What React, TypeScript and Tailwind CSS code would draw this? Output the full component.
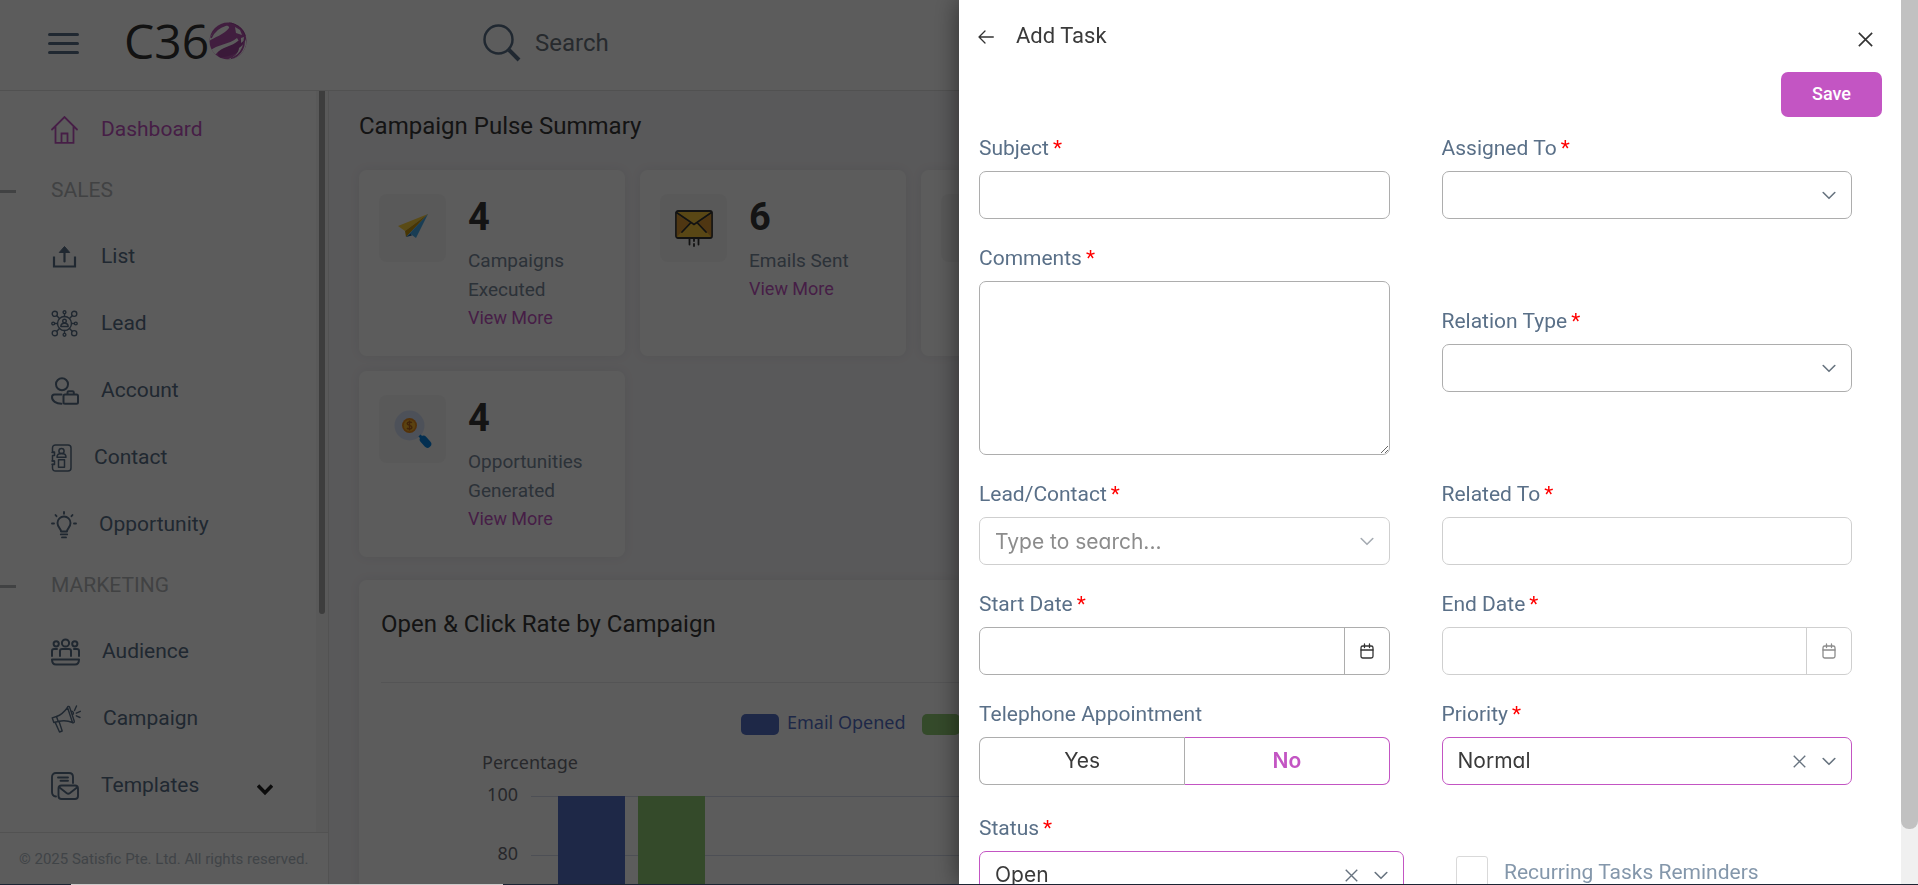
import type { ReactNode } from "react";

const roboto = "font-['Roboto',sans-serif]";
const fieldText = "font-['Inter',sans-serif] text-[21px] text-[#3a3a3a] [font-feature-settings:'cv11']";

/* ---------- icons ---------- */

function Svg({ w, h, sw = 2, className, children }: { w: number; h: number; sw?: number; className?: string; children: ReactNode }) {
  return (
    <svg
      width={w}
      height={h}
      viewBox={`0 0 ${w} ${h}`}
      fill="none"
      stroke="currentColor"
      strokeWidth={sw}
      strokeLinecap="round"
      strokeLinejoin="round"
      aria-hidden="true"
      className={`shrink-0 ${className ?? ""}`}
    >
      {children}
    </svg>
  );
}

const HomeIcon = () => (
  <Svg w={28} h={28} sw={1.8}>
    <path d="M1 13.5 13.5 1 26 13.5M4.5 10.5V26.8H22.5V10.5M10.5 26.8V17.5H16.5V26.8" strokeLinejoin="miter" />
  </Svg>
);

const ListIcon = () => (
  <Svg w={28} h={24} sw={2.2}>
    <path d="M3 12.5V21.5H24V12.5" strokeLinecap="square" strokeLinejoin="miter" />
    <path d="M13.5 16.5V6" />
    <path d="M8.5 7.2 13.5 1.5 18.5 7.2Z" fill="currentColor" strokeWidth={1} />
  </Svg>
);

const LeadIcon = () => (
  <Svg w={28} h={27} sw={1.4}>
    <circle cx="13.5" cy="13.5" r="7" />
    <circle cx="13.5" cy="11" r="1.8" />
    <path d="M9.8 16.5c0-2 1.4-3.3 3.7-3.3s3.7 1.3 3.7 3.3Z" />
    <circle cx="3.8" cy="3.8" r="2.6" />
    <circle cx="23.2" cy="3.8" r="2.6" />
    <circle cx="3.8" cy="23.2" r="2.6" />
    <circle cx="23.2" cy="23.2" r="2.6" />
    <circle cx="13.5" cy="2.2" r="1.4" />
    <circle cx="13.5" cy="24.8" r="1.4" />
    <circle cx="2.2" cy="13.5" r="1.4" />
    <circle cx="24.8" cy="13.5" r="1.4" />
    <path d="M5.8 5.8 8.5 8.5M21.2 5.8 18.5 8.5M5.8 21.2 8.5 18.5M21.2 21.2 18.5 18.5M13.5 3.8V6.5M13.5 20.5V23.2M3.8 13.5H6.5M20.5 13.5H23.2" />
  </Svg>
);

const AccountIcon = () => (
  <Svg w={28} h={28} sw={2}>
    <circle cx="11" cy="7.2" r="6" />
    <path d="M10.5 17.5H3.5C1.8 17.5 1 18.5 1 20c0 4 4 6.7 9.5 6.7" />
    <rect x="12.5" y="17.5" width="14.5" height="9.3" rx="1.5" />
    <path d="M16.5 17v-1.5c0-.8.5-1.2 1.2-1.2h3.8c.8 0 1.3.4 1.3 1.2V17" />
  </Svg>
);

const ContactIcon = () => (
  <Svg w={21} h={28} sw={1.5}>
    <path d="M1.5 8V4C1.5 2.2 2.7 1 4.5 1H17c1.8 0 3 1.2 3 3V24c0 1.8-1.2 3-3 3H4.5c-1.8 0-3-1.2-3-3V20.5H3.5V17H1.5V11.5H3.5V8Z" />
    <path d="M1 8.5H3M1 17H3M1 20.3H3" />
    <circle cx="10.5" cy="7" r="2.6" />
    <path d="M6 13.2c0-2 1.5-3.6 4.5-3.6s4.5 1.6 4.5 3.6Z" />
    <rect x="7.5" y="15.8" width="6" height="7.4" />
  </Svg>
);

const BulbIcon = () => (
  <Svg w={26} h={28} sw={1.9}>
    <path d="M10 20.5C10 17.5 6.5 16.5 6.5 12a6.5 6.5 0 0 1 13 0C19.5 16.5 16 17.5 16 20.5Z" />
    <path d="M9.8 23.4H16.2M11 26.4H15M13 1V2.8M1 12.5H3M23 12.5H25M4.5 4 5.5 5.2M21.5 4 20.5 5.2" />
  </Svg>
);

const AudienceIcon = () => (
  <Svg w={29} h={28} sw={2}>
    <circle cx="14.5" cy="5" r="3.6" />
    <circle cx="5.2" cy="5.8" r="2.6" />
    <circle cx="23.8" cy="5.8" r="2.6" />
    <path d="M9 18V13c0-1.2.6-2 2-2h7c1.4 0 2 .8 2 2V18M1 18V13c0-1.2.6-2 2-2H6M28 18V13c0-1.2-.6-2-2-2H23" />
    <path d="M1 21.5H28c0 3-1.5 5-4 5H5c-2.5 0-4-2-4-5Z" />
  </Svg>
);

const CampaignIcon = () => (
  <Svg w={30} h={28} sw={1.4}>
    <path d="M1.2 12.8 5.5 11.5C10 10 14 6 16.5 2.5L21.5 17.5C17.5 15.8 12 15.2 7.2 16.5L2.8 17.5Z" />
    <path d="M16.5 2.5c-.4-1 1.5-1.6 2-.6l4.8 14.4c.3 1.2-1.5 2-1.8 1.2M5.5 11.5 7.2 16.5M4.2 17.4 8.5 27l2.7-1L8 16.3M20 6.2c2.3-.4 3.4 2.5 1.5 3.7" />
    <path d="M23.5 5.5 25.5 1M25.3 8.2 29.3 6.3M25.3 10.8 29 12.5" />
  </Svg>
);

const TemplatesIcon = () => (
  <Svg w={28} h={28} sw={1.9}>
    <path d="M5 24.5C2.5 24.2 1 22.8 1 20V5C1 2.5 2.5 1 5 1H18c2.5 0 4 1.5 4 4V11M7 5.5H17M9.5 8.8H17" />
    <rect x="7.5" y="13.5" width="19.5" height="13.5" rx="3" />
    <path d="M8.5 15.5 15.5 21c1.2.9 2.3.9 3.5 0L26 15.5" />
  </Svg>
);

const PeopleIcon = () => (
  <Svg w={27} h={40} sw={2}>
    <circle cx="5.5" cy="4" r="3" />
    <path d="M1 16c0-4 2-6 4.5-6S10 12 10 16" />
  </Svg>
);

const ChevronDown = ({ className }: { className?: string }) => (
  <Svg w={14} h={9} sw={1.6} className={className}>
    <path d="M1.2 1.5 7 7.3 12.8 1.5" />
  </Svg>
);

const CrossIcon = ({ size }: { size: number }) => (
  <svg width={size} height={size} viewBox="0 0 14 14" fill="none" stroke="currentColor" strokeWidth={1.5} aria-hidden="true">
    <path d="M.8.8 13.2 13.2M13.2.8.8 13.2" />
  </svg>
);

const CalendarIcon = () => (
  <Svg w={14} h={16} sw={1.3}>
    <rect x="1" y="3" width="12" height="12" rx="1.8" />
    <path d="M1 7H13M4.5 1V4.5M9.5 1V4.5" />
  </Svg>
);

const Globe = () => (
  <svg width={38} height={38} viewBox="0 0 38 38" aria-hidden="true" className="shrink-0">
    <defs>
      <clipPath id="globe">
        <circle cx="19" cy="19" r="18.5" />
      </clipPath>
    </defs>
    <g clipPath="url(#globe)">
      <rect width="38" height="38" fill="#b455b0" />
      <path d="M8 28C16 21 30 22 35 15L37 24C30 32 20 34 10 36Z" fill="#a2459e" />
      <path d="M-1 20C3 16 15 13 20 6C21 3 15 3 11 6C5 9 1 14-1 20Z" fill="#fff" />
      <path d="M2 16C5 9 10 5 17 3" fill="none" stroke="#b455b0" strokeWidth="1.6" />
      <path d="M1 29C8 22 20 23 28 16L29.5 18.5C23 25 13 24 7 32L3 34Z" fill="#fff" />
      <path d="M26 5 31 8 33 13 27 11Z" fill="#fff" />
      <path d="M32 16 35 15 34.5 19 32 21Z" fill="#fff" />
      <path d="M30 26C33 24 36 20 37 17L38 26 32 33C26 37 22 38 17 38C24 36 30 31 30 26Z" fill="#fff" />
      <path d="M35 20C35 27 30 34 22 36.5" fill="none" stroke="#b455b0" strokeWidth="1.7" />
      <path d="M20 0C28 1 35 6 36.5 14" fill="none" stroke="#a2459e" strokeWidth="2" />
    </g>
  </svg>
);

const PlaneArt = () => (
  <svg width={30} height={26} viewBox="0 0 30 26" aria-hidden="true" className="mb-1">
    <path d="M0 13 30 1 7 18Z" fill="#f9cf3e" />
    <path d="M7 18 30 1 8 24Z" fill="#c8960c" />
    <path d="M8 24 12 20 30 1 18 25 12.5 21Z" fill="#45a9e8" />
    <path d="M8 24 12.5 20.8 14 22.5Z" fill="#1f5f95" />
  </svg>
);

const EnvelopeArt = () => (
  <svg width={38} height={37} viewBox="0 0 38 37" fill="none" stroke="#333" strokeWidth={1.8} strokeLinecap="round" aria-hidden="true">
    <rect x="1" y="1" width="36" height="27" rx="2" fill="#f6c63c" />
    <path d="M1.8 4 15 13 1.8 27ZM36.2 4 23 13 36.2 27Z" fill="#dc9733" stroke="none" />
    <path d="M1.5 2.5 19 14.5 36.5 2.5M15.5 13 7 22M22.5 13 31 22" />
    <path d="M14.5 29V34.5M23.5 29V34.5M19 29V31M19 34V36" />
  </svg>
);

const MagnifierArt = () => (
  <svg width={38} height={38} viewBox="0 0 38 38" aria-hidden="true">
    <circle cx="15.5" cy="15.5" r="15" fill="#d6e0f5" />
    <circle cx="15.5" cy="15.5" r="7.5" fill="#e68a1d" />
    <circle cx="15.5" cy="15.5" r="5.7" fill="#f8b62d" />
    <path d="M17.8 12.8c-.6-1-4.6-1.3-4.6.8s4.7 1.4 4.7 3.6-4 2-4.9.8M15.5 10.5V20.5" fill="none" stroke="#b5651d" strokeWidth="1.4" />
    <path d="M25.5 25.5 28 28" stroke="#0a84e0" strokeWidth="3" />
    <path d="M29.5 29.5 33.5 34" stroke="#0a84e0" strokeWidth="7.5" strokeLinecap="round" />
  </svg>
);

/* ---------- sidebar ---------- */

function NavItem({ icon, label, active, open }: { icon: ReactNode; label?: string; active?: boolean; open?: boolean }) {
  return (
    <li>
      <a
        href="#"
        className={`flex h-[67px] items-center gap-[22px] pl-[51px] pr-[43px] text-[21px] ${active ? "text-[#c355c3]" : "text-[#5a7088]"}`}
      >
        {icon}
        {label && <span className="flex-1">{label}</span>}
        {open && (
          <svg width={16} height={12} viewBox="0 0 16 12" fill="none" stroke="#222" strokeWidth={3.5} aria-hidden="true" className="mt-2">
            <path d="M1 1.5 8 8.8 15 1.5" />
          </svg>
        )}
      </a>
    </li>
  );
}

function NavHeading({ children }: { children: ReactNode }) {
  return (
    <li className="flex h-[60px] items-center gap-[35px] pb-1 text-[21px] text-[#b4b7bb]">
      <span className="h-[3px] w-4 bg-[#b4b7bb]" />
      {children}
    </li>
  );
}

function Sidebar() {
  return (
    <aside className="flex w-[329px] shrink-0 flex-col border-r border-[#e4e4e4] bg-white">
      <div className="flex min-h-0 flex-1">
        <nav className="min-w-0 flex-1 overflow-hidden pt-[5px]">
          <ul>
            <NavItem icon={<HomeIcon />} label="Dashboard" active />
            <NavHeading>SALES</NavHeading>
            <NavItem icon={<ListIcon />} label="List" />
            <NavItem icon={<LeadIcon />} label="Lead" />
            <NavItem icon={<AccountIcon />} label="Account" />
            <NavItem icon={<ContactIcon />} label="Contact" />
            <NavItem icon={<BulbIcon />} label="Opportunity" />
            <NavHeading>MARKETING</NavHeading>
            <NavItem icon={<AudienceIcon />} label="Audience" />
            <NavItem icon={<CampaignIcon />} label="Campaign" />
            <NavItem icon={<TemplatesIcon />} label="Templates" open />
            <NavItem icon={<PeopleIcon />} />
          </ul>
        </nav>
        <div className="w-3 bg-[#f5f5f5] px-[3px]">
          <div className="h-[523px] rounded-b-full bg-[#a8a8a8]" />
        </div>
      </div>
      <footer className="h-[53px] shrink-0 border-t border-[#e4e4e4] pl-[19px] pt-[14px] text-[15px] leading-6 text-[#b2bcc6]">
        © 2025 Satisfic Pte. Ltd. All rights reserved.
      </footer>
    </aside>
  );
}

/* ---------- dashboard ---------- */

function StatCard({ art, value, label }: { art?: ReactNode; value?: number; label?: string }) {
  return (
    <article className="flex h-[186px] gap-[22px] rounded-lg bg-white px-5 py-6 shadow-[0_0_12px_rgba(0,0,0,0.06)]">
      <div className="flex h-[68px] w-[67px] shrink-0 items-center justify-center rounded-lg bg-[#f6f6f6]">{art}</div>
      {label && (
        <div className="min-w-0">
          <p className="pb-[6px] text-[38px] font-bold leading-[46px] text-[#383838]">{value}</p>
          <p className="text-[19px] leading-[29px] text-[#7a8a9c]">{label}</p>
          <a href="#" className="block text-[18px] leading-[27px] text-[#c355c3]">
            View More
          </a>
        </div>
      )}
    </article>
  );
}

function RateChart() {
  return (
    <svg width="1400" height="300" viewBox="0 0 1400 300" className="font-['Noto_Sans',sans-serif] text-[18px]" role="img" aria-label="Open and click rate">
      <rect x="360" y="31" width="38" height="21" rx="5" fill="#5470c6" />
      <text x="406" y="46" fill="#5470c6">Email Opened</text>
      <rect x="541" y="31" width="38" height="21" rx="5" fill="#91cc75" />
      <text x="101" y="86" fill="#6e7079">Percentage</text>
      <g fill="#6e7079" textAnchor="end">
        <text x="137" y="118">100</text>
        <text x="137" y="177">80</text>
      </g>
      <path d="M150 113.5H1400M150 172.5H1400M150 231.5H1400" stroke="#d5dbea" />
      <rect x="177" y="113" width="67" height="187" fill="#5470c6" />
      <rect x="257" y="113" width="67" height="187" fill="#91cc75" />
    </svg>
  );
}

function Dashboard() {
  return (
    <main className="min-w-0 flex-1 overflow-hidden bg-[#f6f5f8] pl-[30px] pr-8">
      <h2 className="pb-7 pt-[19px] text-[24px] leading-8 text-[#383838]">Campaign Pulse Summary</h2>
      <div className="grid grid-cols-[repeat(auto-fill,266px)] gap-[15px]">
        <StatCard art={<PlaneArt />} value={4} label="Campaigns Executed" />
        <StatCard art={<EnvelopeArt />} value={6} label="Emails Sent" />
        <StatCard />
        <StatCard />
        <StatCard />
        <StatCard art={<MagnifierArt />} value={4} label="Opportunities Generated" />
      </div>
      <section className="mt-[23px] rounded-lg bg-white px-[22px] shadow-[0_0_12px_rgba(0,0,0,0.06)]">
        <h2 className="border-b border-[#e9e9ec] pb-[42px] pt-7 text-[24px] leading-8 text-[#383838]">Open &amp; Click Rate by Campaign</h2>
        <div className="overflow-hidden">
          <RateChart />
        </div>
      </section>
    </main>
  );
}

function TopBar() {
  return (
    <header className="flex h-[91px] shrink-0 items-center border-b border-[#e0e0e0] bg-white pb-1 pl-12">
      <button type="button" aria-label="Menu" className="flex w-[31px] flex-col gap-[6px]">
        <span className="h-[3px] rounded-full bg-[#5a7088]" />
        <span className="h-[3px] rounded-full bg-[#5a7088]" />
        <span className="h-[3px] rounded-full bg-[#5a7088]" />
      </button>
      <div className="flex w-[404px] items-center pb-1 pl-[45px]">
        <span className="font-['Open_Sans',sans-serif] text-[48px] leading-none text-[#333]">C36</span>
        <Globe />
      </div>
      <label className="flex items-center gap-[14px] text-[24px] text-[#5a7088]">
        <Svg w={38} h={38} sw={2.5}>
          <circle cx="15.5" cy="15.5" r="14" />
          <path d="M26 26 36 36" strokeWidth={4} strokeLinecap="butt" />
        </Svg>
        <input type="search" placeholder="Search" className="w-80 outline-none placeholder:text-[#6c7680]" />
      </label>
    </header>
  );
}

/* ---------- drawer ---------- */

const box = "block h-12 w-full rounded-[7px] border bg-white outline-none";

function Label({ htmlFor, children, required = true }: { htmlFor: string; children: ReactNode; required?: boolean }) {
  return (
    <label htmlFor={htmlFor} className="block pb-2 text-[21px] leading-[30px] text-[#5a7088]">
      {children}
      {required && <span className="pl-1 text-[#ff0000]">*</span>}
    </label>
  );
}

function SelectField({ id, label, value }: { id: string; label: string; value?: string }) {
  return (
    <div className="w-full">
      <Label htmlFor={id}>{label}</Label>
      <div className="relative">
        <select id={id} className={`${box} ${fieldText} appearance-none px-[15px] ${value ? "border-[#c355c3]" : "border-[#adadad]"}`}>
          <option>{value ?? ""}</option>
        </select>
        <div className="pointer-events-none absolute inset-y-0 right-4 flex items-center gap-4 text-[#67737f]">
          {value && (
            <button type="button" aria-label={`Clear ${label}`} className="pointer-events-auto">
              <CrossIcon size={13} />
            </button>
          )}
          <ChevronDown />
        </div>
      </div>
    </div>
  );
}

function DateField({ id, label, disabled }: { id: string; label: string; disabled?: boolean }) {
  const line = disabled ? "border-[#cfcfcf]" : "border-[#adadad]";
  return (
    <div>
      <Label htmlFor={id}>{label}</Label>
      <div className={`${box} ${line} flex overflow-hidden`}>
        <input id={id} type="text" disabled={disabled} className={`${fieldText} min-w-0 flex-1 px-[15px] outline-none`} />
        <button
          type="button"
          disabled={disabled}
          aria-label={`Pick ${label}`}
          className={`flex w-[45px] items-center justify-center border-l ${line} ${disabled ? "text-[#8c8c8c]" : "text-[#333]"}`}
        >
          <CalendarIcon />
        </button>
      </div>
    </div>
  );
}

function TaskDrawer() {
  return (
    <div role="dialog" aria-label="Add Task" className="fixed inset-y-0 right-0 flex w-1/2 bg-white shadow-[0_0_24px_rgba(0,0,0,0.5)]">
      <div className="min-w-0 flex-1 overflow-hidden">
        <header className="flex items-center pb-4 pl-[19px] pr-7 pt-5">
          <button type="button" aria-label="Back" className="pt-[2px] text-[#333]">
            <Svg w={16} h={14} sw={1.3}>
              <path d="M15.3 7H1M7 1 1 7 7 13" />
            </Svg>
          </button>
          <h1 className="flex-1 pl-[22px] text-[22px] leading-8 text-[#3a3a3a]">Add Task</h1>
          <button type="button" aria-label="Close" className="pt-[6px] text-[#333]">
            <CrossIcon size={15} />
          </button>
        </header>
        <div className="flex justify-end pb-4 pr-[19px] pt-1">
          <button type="button" className="h-[45px] w-[101px] rounded-[7px] bg-[#c355c3] pb-[2px] text-[18px] font-medium text-white">
            Save
          </button>
        </div>
        <form className="pl-5 pr-[49px]">
          <div className="grid grid-cols-2 items-center gap-x-[52px] gap-y-6">
            <div>
              <Label htmlFor="subject">Subject</Label>
              <input id="subject" type="text" className={`${box} ${fieldText} border-[#adadad] px-[15px]`} />
            </div>
            <SelectField id="assigned" label="Assigned To" />
            <div>
              <Label htmlFor="comments">Comments</Label>
              <textarea id="comments" className={`${fieldText} block h-[174px] w-full rounded-[7px] border border-[#adadad] px-[15px] py-2 outline-none`} />
            </div>
            <SelectField id="relation" label="Relation Type" />
            <div>
              <Label htmlFor="lead">Lead/Contact</Label>
              <div className="relative">
                <input
                  id="lead"
                  type="text"
                  disabled
                  placeholder="Type to search..."
                  className={`${box} ${fieldText} border-[#cfcfcf] px-[15px] placeholder:text-[#8c8c8c]`}
                />
                <ChevronDown className="absolute right-4 top-5 text-[#a5abb2]" />
              </div>
            </div>
            <div>
              <Label htmlFor="related">Related To</Label>
              <input id="related" type="text" disabled className={`${box} ${fieldText} border-[#cfcfcf] px-[15px]`} />
            </div>
            <DateField id="start" label="Start Date" />
            <DateField id="end" label="End Date" disabled />
            <div>
              <Label htmlFor="phone-no" required={false}>
                Telephone Appointment
              </Label>
              <div className={`${fieldText} flex h-12 text-center`}>
                <button type="button" className="w-1/2 rounded-l-[7px] border border-r-0 border-[#adadad]">
                  Yes
                </button>
                <button
                  id="phone-no"
                  type="button"
                  className="w-1/2 rounded-r-[7px] border border-[#c355c3] border-l-[#adadad] font-semibold text-[#c355c3]"
                >
                  No
                </button>
              </div>
            </div>
            <SelectField id="priority" label="Priority" value="Normal" />
          </div>
          <div className="flex gap-[52px] pt-7">
            <div className="w-[425px] shrink-0">
              <SelectField id="status" label="Status" value="Open" />
            </div>
            <label className="flex items-center gap-4 self-end pb-[11px] text-[21px] leading-8 text-[#8497ab]">
              <input type="checkbox" disabled className="size-8 shrink-0 appearance-none rounded-[3px] border border-[#d9d9d9] bg-white" />
              Recurring Tasks Reminders
            </label>
          </div>
        </form>
      </div>
      <div className="w-[17px] shrink-0 bg-[#f0f0f0]">
        <div className="h-[829px] rounded-b-lg bg-[#c1c1c1]" />
      </div>
    </div>
  );
}

export default function App() {
  return (
    <div className={`${roboto} flex h-screen flex-col overflow-hidden`}>
      <TopBar />
      <div className="flex min-h-0 flex-1">
        <Sidebar />
        <Dashboard />
      </div>
      <div className="fixed inset-0 bg-black/64" />
      <TaskDrawer />
      <div className="fixed inset-x-0 bottom-0 flex h-px bg-[#1c2433]">
        <div className="ml-[71px] w-[432px] bg-[#cfcaca]" />
      </div>
    </div>
  );
}
